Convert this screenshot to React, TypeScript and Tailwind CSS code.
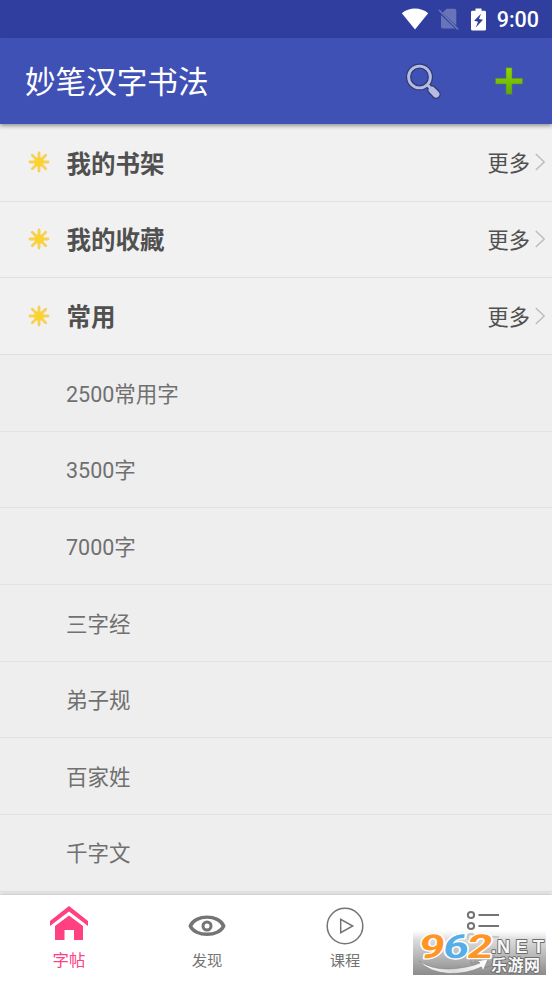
import React from "react";

const groups = ["我的书架", "我的收藏", "常用"];
const items = ["2500常用字", "3500字", "7000字", "三字经", "弟子规", "百家姓", "千字文"];

function StatusBar() {
  return (
    <div className="flex h-[38px] shrink-0 items-center justify-end bg-[#303f9f] pr-[13px] text-white">
      <svg width="28" height="22" viewBox="0 0 28 22" className="mr-[9px]">
        <path d="M0.8 5.2C8.5-1 19.5-1 27.2 5.2L14 21.4Z" fill="#fff" />
      </svg>
      <svg width="21" height="22" viewBox="0 0 21 22" className="mr-[12px]">
        <path d="M8.5 0.8H16.5Q18.3 0.8 18.3 2.6V17.5L4.6 4.7ZM3 7L17 20.5H4.8Q3 20.5 3 18.7Z" fill="#6974b8" />
        <path d="M1 2L20 21.4" stroke="#6974b8" strokeWidth="1.7" />
      </svg>
      <svg width="15" height="23" viewBox="0 0 15 23" className="mr-[11px]">
        <path d="M4.5 0.5H10.5V2.8H13.5Q15 2.8 15 4V21.2Q15 22.5 13.5 22.5H1.5Q0 22.5 0 21.2V4Q0 2.8 1.5 2.8H4.5Z" fill="#fff" />
        <path d="M10 5.8L3.1 12.8L7 13.7L4.8 19.4L12 11.8L8 11Z" fill="#303f9f" />
      </svg>
      <span className="pt-[2px] font-[Roboto,sans-serif] text-[21.5px] leading-none font-medium">9:00</span>
    </div>
  );
}

function Header() {
  return (
    <header className="relative z-10 flex h-[86px] shrink-0 items-center bg-[#3f51b5] pr-[30px] pl-[25px] shadow-[0_2px_4px_rgba(0,0,0,0.38)]">
      <h1 className="flex-1 pt-[4px] text-[30.6px] leading-none text-white">妙笔汉字书法</h1>
      <svg width="38" height="38" viewBox="0 0 38 38" className="mr-[53px]">
        <g stroke="#303b72" fill="none">
          <circle cx="15.5" cy="15" r="10.9" strokeWidth="5.4" />
          <path d="M23.5 23L27 26.5" strokeWidth="6" />
          <path d="M28 28L32 32.2" strokeWidth="9.4" strokeLinecap="round" />
        </g>
        <g stroke="#b5bbe2" fill="none">
          <circle cx="15.5" cy="15" r="10.9" strokeWidth="2.9" />
          <path d="M23 22.5L27 26.5" strokeWidth="3" />
          <path d="M28 28L32 32.2" strokeWidth="6.8" strokeLinecap="round" />
        </g>
      </svg>
      <svg width="28" height="28" viewBox="0 0 28 28" className="-mr-[1px]">
        <defs>
          <linearGradient id="plus" x1="0" y1="0" x2="0" y2="1">
            <stop stopColor="#91d900" />
            <stop offset="1" stopColor="#5fa80b" />
          </linearGradient>
        </defs>
        <path d="M11 0.7H17V11.3H27.5V17H17V27.3H11V17H0.5V11.3H11Z" fill="url(#plus)" stroke="#557f43" strokeWidth="0.6" />
      </svg>
    </header>
  );
}

function Spark() {
  return (
    <svg width="22" height="22" viewBox="0 0 22 22" className="mr-[17px] mb-[1px]">
      <g stroke="#f6d057" strokeWidth="2.8" strokeLinecap="round">
        <path d="M11 2V20M2 11H20M4.3 4.3L17.7 17.7M17.7 4.3L4.3 17.7" />
      </g>
      <circle cx="11" cy="11" r="4.8" fill="#fbd32f" />
    </svg>
  );
}

function GroupRow({ title }: { title: string }) {
  return (
    <div className="flex h-[76.67px] shrink-0 items-center border-b border-[#e0e0e0] bg-[#f1f1f1] pr-[7px] pl-[27.5px]">
      <Spark />
      <h2 className="flex-1 pt-[4px] text-[24.5px] leading-none font-bold text-[#505050]">{title}</h2>
      <span className="mr-[5px] pt-[2px] text-[21.2px] leading-none text-[#505050]">更多</span>
      <svg width="10" height="18" viewBox="0 0 10 18" fill="none" stroke="#bdbdbd" strokeWidth="1.5" className="mb-[1px]">
        <path d="M0.8 1L9.2 9L0.8 17" />
      </svg>
    </div>
  );
}

function NavItem({ label, active, children }: { label: string; active?: boolean; children: React.ReactNode }) {
  return (
    <div className={active ? "flex flex-1 flex-col items-center text-[#ff4081]" : "flex flex-1 flex-col items-center text-[#747474]"}>
      <div className="flex h-[55px] items-center pt-[6px]">{children}</div>
      <span className={active ? "mt-[2px] text-[16.4px] leading-[18px]" : "mt-[2px] text-[15.3px] leading-[18px]"}>{label}</span>
    </div>
  );
}

function Watermark() {
  return (
    <svg className="absolute top-[35px] left-[413px] overflow-visible" width="133" height="45" viewBox="0 0 133 45">
      <defs>
        <linearGradient id="fade" x1="0" y1="0" x2="0" y2="1">
          <stop stopColor="#fff" stopOpacity="0.5" />
          <stop offset="0.2" stopColor="#d8d8d8" stopOpacity="0.85" />
          <stop offset="1" stopColor="#7b7b7b" stopOpacity="0.88" />
        </linearGradient>
        <linearGradient id="swoosh" x1="0" y1="0" x2="1" y2="0">
          <stop stopColor="#fff" />
          <stop offset="0.5" stopColor="#ddd" />
          <stop offset="1" stopColor="#fff" />
        </linearGradient>
      </defs>
      <rect width="133" height="45" fill="url(#fade)" />
      <path d="M6 31Q19 39.500 36 39Q55 38 67 33L64 31L75 29L70 41L68.500 37Q53 44 36 43.500Q16 42 6 31Z" fill="url(#swoosh)" stroke="#777" strokeWidth="0.5" />
      <g transform="translate(5 0) skewX(-8)" className="font-[Roboto,sans-serif] text-[33px] font-bold" stroke="#fff" strokeWidth="2.6" paintOrder="stroke" strokeLinejoin="round">
        <text x="4" y="28" fill="#ff9526" textLength="25.5" lengthAdjust="spacingAndGlyphs">9</text>
        <text x="28" y="28" fill="#56aee8" textLength="25.5" lengthAdjust="spacingAndGlyphs">6</text>
        <text x="52" y="28" fill="#ff9526" textLength="25.5" lengthAdjust="spacingAndGlyphs">2</text>
      </g>
      <g fill="#f7f7f7" stroke="#6d6d6d" strokeWidth="1.8" paintOrder="stroke" strokeLinejoin="round">
        <text x="78" y="23" className="font-['Liberation_Sans',sans-serif] text-[19px] font-bold">.</text>
        <text x="84" y="22.500" className="font-['Liberation_Sans',sans-serif] text-[18px] font-bold" textLength="47" lengthAdjust="spacing">NET</text>
        <text x="78" y="41" className="font-['Noto_Sans_CJK_SC',sans-serif] text-[16px] font-bold" textLength="49">乐游网</text>
      </g>
    </svg>
  );
}

export default function App() {
  return (
    <div className="flex h-[981px] w-[552px] flex-col overflow-hidden bg-[#eee] font-[Roboto,'Noto_Sans_CJK_SC',sans-serif]">
      <StatusBar />
      <Header />
      <main className="flex min-h-0 flex-1 flex-col overflow-hidden pt-[1px]">
        {groups.map((title) => (
          <GroupRow key={title} title={title} />
        ))}
        {items.map((title) => (
          <div key={title} className="flex h-[76.67px] shrink-0 items-center border-b border-[#e2e2e2] bg-[#eee] pt-[3px] pl-[66px] text-[21.5px] leading-none text-[#707070]">
            {title}
          </div>
        ))}
      </main>
      <nav className="relative flex h-[86px] shrink-0 bg-white shadow-[0_-1px_4px_rgba(0,0,0,0.2)]">
        <NavItem label="字帖" active>
          <svg width="38" height="34" viewBox="0 0 38 34" fill="currentColor" className="mb-[6px]">
            <path d="M19 0L38 15V20L19 5.5L0 20V15Z" />
            <path d="M19 9.5L33 20V34H24V24H14.5V34H5V20Z" />
          </svg>
        </NavItem>
        <NavItem label="发现">
          <svg width="38" height="22" viewBox="0 0 38 22" fill="none" stroke="currentColor">
            <path d="M2.3 11C7-0.8 31-0.8 35.7 11C31 22 7 22 2.3 11Z" strokeWidth="3.4" />
            <circle cx="19" cy="11" r="4" strokeWidth="3" />
          </svg>
        </NavItem>
        <NavItem label="课程">
          <svg width="38" height="38" viewBox="0 0 38 38" fill="none" stroke="currentColor" strokeWidth="1.5">
            <circle cx="19" cy="19" r="17.8" />
            <path d="M14.7 12.3V25.7L26.7 19Z" />
          </svg>
        </NavItem>
        <NavItem label="更多">
          <svg width="34" height="32" viewBox="0 0 34 32" fill="none" stroke="currentColor" strokeWidth="2">
            <circle cx="5" cy="5" r="3.1" />
            <circle cx="5" cy="16" r="3.1" />
            <circle cx="5" cy="27" r="3.1" />
            <path d="M12.5 5H33M12.5 16H33M12.5 27H33" />
          </svg>
        </NavItem>
        <Watermark />
      </nav>
    </div>
  );
}
